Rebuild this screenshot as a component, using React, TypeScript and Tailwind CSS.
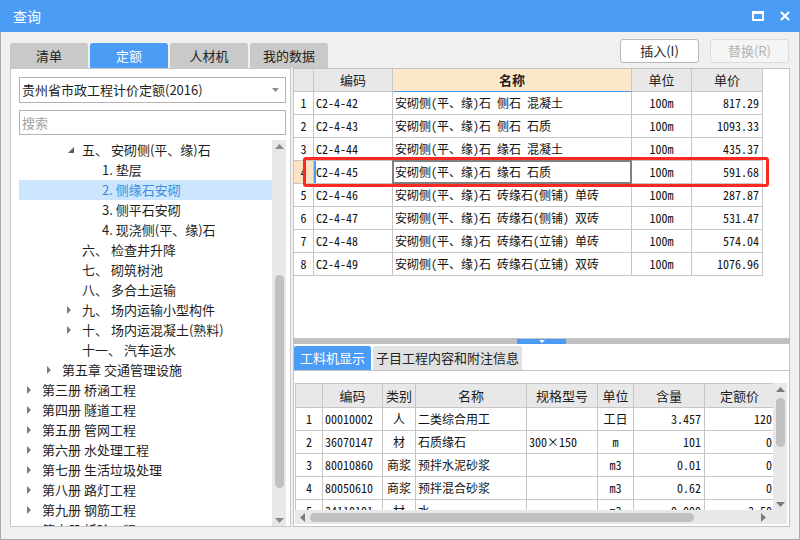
import React from 'react';

const mono = "font-['Noto_Sans_Mono_CJK_SC','Liberation_Mono','Noto_Sans_CJK_SC',monospace] text-[12px]";

type TreeItem = { lvl: number; t: string; exp?: boolean; col?: boolean; sel?: boolean };

const tree: TreeItem[] = [
  { lvl: 2, exp: true, t: '五、 安砌侧(平、缘)石' },
  { lvl: 3, t: '1. 垫层' },
  { lvl: 3, t: '2. 侧缘石安砌', sel: true },
  { lvl: 3, t: '3. 侧平石安砌' },
  { lvl: 3, t: '4. 现浇侧(平、缘)石' },
  { lvl: 2, t: '六、 检查井升降' },
  { lvl: 2, t: '七、 砌筑树池' },
  { lvl: 2, t: '八、 多合土运输' },
  { lvl: 2, col: true, t: '九、 场内运输小型构件' },
  { lvl: 2, col: true, t: '十、 场内运混凝土(熟料)' },
  { lvl: 2, t: '十一、 汽车运水' },
  { lvl: 1, col: true, t: '第五章 交通管理设施' },
  { lvl: 0, col: true, t: '第三册 桥涵工程' },
  { lvl: 0, col: true, t: '第四册 隧道工程' },
  { lvl: 0, col: true, t: '第五册 管网工程' },
  { lvl: 0, col: true, t: '第六册 水处理工程' },
  { lvl: 0, col: true, t: '第七册 生活垃圾处理' },
  { lvl: 0, col: true, t: '第八册 路灯工程' },
  { lvl: 0, col: true, t: '第九册 钢筋工程' },
  { lvl: 0, col: true, t: '第十册 拆除工程' },
];

const indent = ['w-[8px]', 'w-[28px]', 'w-[48px]', 'w-[68px]'];

const topRows = [
  ['1', 'C2-4-42', '安砌侧(平、缘)石 侧石 混凝土', '100m', '817.29'],
  ['2', 'C2-4-43', '安砌侧(平、缘)石 侧石 石质', '100m', '1093.33'],
  ['3', 'C2-4-44', '安砌侧(平、缘)石 缘石 混凝土', '100m', '435.37'],
  ['4', 'C2-4-45', '安砌侧(平、缘)石 缘石 石质', '100m', '591.68'],
  ['5', 'C2-4-46', '安砌侧(平、缘)石 砖缘石(侧铺) 单砖', '100m', '287.87'],
  ['6', 'C2-4-47', '安砌侧(平、缘)石 砖缘石(侧铺) 双砖', '100m', '531.47'],
  ['7', 'C2-4-48', '安砌侧(平、缘)石 砖缘石(立铺) 单砖', '100m', '574.04'],
  ['8', 'C2-4-49', '安砌侧(平、缘)石 砖缘石(立铺) 双砖', '100m', '1076.96'],
];

const botRows = [
  ['1', '00010002', '人', '二类综合用工', '', '工日', '3.457', '120'],
  ['2', '36070147', '材', '石质缘石', '300×150', 'm', '101', '0'],
  ['3', '80010860', '商浆', '预拌水泥砂浆', '', 'm3', '0.01', '0'],
  ['4', '80050610', '商浆', '预拌混合砂浆', '', 'm3', '0.62', '0'],
  ['5', '34110101', '材', '水', '', 'm3', '0.000', '3.50'],
];

function TriRight() {
  return (
    <svg width="5" height="8" viewBox="0 0 5 8">
      <polygon points="0,0 4,4 0,8" fill="#7d7d7d" />
    </svg>
  );
}

function TriExp() {
  return (
    <svg width="6" height="6" viewBox="0 0 6 6">
      <polygon points="6,0 6,6 0,6" fill="#5c5c5c" />
    </svg>
  );
}

function TriUp({ c = '#8a8a8a' }: { c?: string }) {
  return (
    <svg width="9" height="5" viewBox="0 0 9 5">
      <polygon points="0,5 4.5,0 9,5" fill={c} />
    </svg>
  );
}

function TriDown({ c = '#8a8a8a', w = 9, h = 5 }: { c?: string; w?: number; h?: number }) {
  return (
    <svg width={w} height={h} viewBox={`0 0 ${w} ${h}`}>
      <polygon points={`0,0 ${w},0 ${w / 2},${h}`} fill={c} />
    </svg>
  );
}

function TitleBar() {
  return (
    <div className="h-[32px] shrink-0 bg-[#4a9cf4] flex items-center justify-between pl-[13px] pr-[10px] text-white text-[14px]">
      <span>查询</span>
      <div className="flex items-center gap-[16px]">
        <svg width="12" height="10" viewBox="0 0 12 10">
          <rect x="1" y="1.5" width="10" height="7.5" fill="none" stroke="white" strokeWidth="2" />
          <rect x="0" y="0" width="12" height="3" fill="white" />
        </svg>
        <svg width="10" height="10" viewBox="0 0 10 10">
          <path d="M1 1 L9 9 M9 1 L1 9" stroke="white" strokeWidth="2.2" />
        </svg>
      </div>
    </div>
  );
}

function TopRow() {
  const tabs = ['清单', '定额', '人材机', '我的数据'];
  return (
    <div className="h-[36px] shrink-0 flex justify-between">
      <div className="flex items-end gap-[2px]">
        {tabs.map((t, i) => (
          <div
            key={t}
            className={
              i === 1
                ? 'w-[78px] h-[25px] rounded-t-[3px] flex items-center justify-center bg-[#4a9cf4] text-white'
                : 'w-[78px] h-[25px] rounded-t-[3px] flex items-center justify-center bg-[#c9c9c9] text-[#222]'
            }
          >
            {t}
          </div>
        ))}
      </div>
      <div className="flex gap-[11px] pt-[7px] mr-[1px]">
        <div className="w-[79px] h-[24px] border border-[#b9b9b9] rounded-[3px] bg-white flex items-center justify-center text-[#222]">
          插入(I)
        </div>
        <div className="w-[79px] h-[24px] border border-[#dcdcdc] rounded-[3px] bg-[#f5f5f5] flex items-center justify-center text-[#b3b3b3]">
          替换(R)
        </div>
      </div>
    </div>
  );
}

function LeftPanel() {
  return (
    <div className="w-[281px] h-full bg-white border border-[#c9c9c9] pl-[8px] pr-[4px] pt-[8px] flex flex-col">
      <div className="h-[26px] shrink-0 border border-[#b3b3b3] flex items-center justify-between pl-[2px] pr-[6px]">
        <span>贵州省市政工程计价定额(2016)</span>
        <TriDown c="#8c8c8c" w={7} h={4} />
      </div>
      <div className="h-[25px] shrink-0 mt-[7px] border border-[#b3b3b3] flex items-center pl-[2px] text-[#a3a3a3]">
        搜索
      </div>
      <div className="mt-[5px] flex-1 min-h-0 flex overflow-hidden">
        <div className="flex-1 overflow-hidden">
          {tree.map((it, i) => (
            <div
              key={i}
              className={
                it.sel
                  ? 'h-[20px] flex items-center bg-[#cce6fd] text-[#3a8de0] whitespace-nowrap'
                  : 'h-[20px] flex items-center text-[#1e1e1e] whitespace-nowrap'
              }
            >
              <div className={indent[it.lvl] + ' shrink-0'} />
              <div className="w-[15px] shrink-0 flex items-center">
                {it.col && <TriRight />}
                {it.exp && (
                  <span className="ml-[1px] flex">
                    <TriExp />
                  </span>
                )}
              </div>
              <span>{it.t}</span>
            </div>
          ))}
        </div>
        <div className="w-[14px] shrink-0 bg-[#e8e8e8] flex flex-col items-center">
          <div className="h-[12px] flex items-center justify-center">
            <TriUp />
          </div>
          <div className="mt-[123px] w-[9px] h-[213px] rounded-full bg-[#c1c1c1]" />
          <div className="flex-1" />
          <div className="h-[12px] flex items-center justify-center">
            <TriDown />
          </div>
        </div>
      </div>
    </div>
  );
}

const tc = 'border-r border-b border-[#c6c6c6] h-full flex items-center shrink-0 overflow-hidden whitespace-nowrap';

function TopTable() {
  return (
    <div className="h-[271px] shrink-0 bg-white border border-[#c3c3c3] relative overflow-hidden">
      <div className="flex h-[23px]">
        <div className={tc + ' w-[20px] bg-[#e8e8e8]'} />
        <div className={tc + ' w-[79px] bg-[#e8e8e8] justify-center'}>编码</div>
        <div className="w-[239px] h-full border-r border-[#c6c6c6] border-b border-b-[#4a9cf4] bg-[#fde7c9] flex items-center justify-center font-bold shrink-0">
          名称
        </div>
        <div className={tc + ' w-[60px] bg-[#e8e8e8] justify-center'}>单位</div>
        <div className={tc + ' w-[71px] bg-[#e8e8e8] justify-center'}>单价</div>
      </div>
      {topRows.map((r) => {
        const cur = r[0] === '4';
        return (
          <div key={r[0]} className={'flex h-[23px] text-[#111] ' + mono}>
            <div className={tc + (cur ? ' bg-[#fde3c3]' : '') + ' w-[20px] justify-center'}>{r[0]}</div>
            <div className={tc + ' w-[79px] pl-[2px] relative'}>
              {cur && <div className="absolute left-0 top-0 bottom-0 w-[2px] bg-[#4a9cf4]" />}
              {r[1]}
            </div>
            <div className={tc + ' w-[239px] pl-[2px] relative overflow-visible'}>
              {cur && <div className="absolute -left-[1px] -top-[1px] -right-[1px] -bottom-[1px] border-2 border-[#7f7f7f]" />}
              {r[2]}
            </div>
            <div className={tc + ' w-[60px] justify-center'}>{r[3]}</div>
            <div className={tc + ' w-[71px] justify-end pr-[3px]'}>{r[4]}</div>
          </div>
        );
      })}
      <div className="absolute left-[9px] top-[88px] w-[466px] h-[30px] border-[3px] border-[#fa2a22] rounded-[3px]" />
    </div>
  );
}

const bc = 'border-r border-b border-[#c6c6c6] h-full flex items-center shrink-0 overflow-hidden whitespace-nowrap';
const bw = ['w-[27px]', 'w-[60px]', 'w-[33px]', 'w-[111px]', 'w-[71px]', 'w-[36px]', 'w-[71px]'];

function BottomPanel() {
  const heads = ['', '编码', '类别', '名称', '规格型号', '单位', '含量'];
  return (
    <div className="h-[183px] shrink-0 bg-white border-x border-b border-[#c3c3c3] flex flex-col">
      <div className="h-[27px] shrink-0 border-b border-[#c3c3c3] flex items-end gap-[2px]">
        <div className="w-[77px] h-[24px] rounded-t-[2px] bg-[#4a9cf4] text-white flex items-center justify-center">
          工料机显示
        </div>
        <div className="w-[149px] h-[24px] rounded-t-[2px] bg-[#e1e1e1] text-[#222] flex items-center justify-center">
          子目工程内容和附注信息
        </div>
      </div>
      <div className="h-[12px] shrink-0" />
      <div className="flex flex-col pl-[1px] pr-[2px]">
        <div className="flex h-[127px]">
          <div className="w-[478px] border-l border-t border-[#c6c6c6] overflow-hidden">
            <div className="flex h-[24px] bg-[#e8e8e8]">
              {heads.map((h, i) => (
                <div key={i} className={bc + ' ' + bw[i] + ' justify-center'}>
                  {h}
                </div>
              ))}
              <div className="w-[69px] h-full border-b border-[#c6c6c6] flex items-center justify-center shrink-0">定额价</div>
            </div>
            {botRows.map((r) => (
              <div key={r[0]} className={'flex h-[23px] text-[#111] ' + mono}>
                <div className={bc + ' ' + bw[0] + ' justify-center'}>{r[0]}</div>
                <div className={bc + ' ' + bw[1] + ' pl-[2px]'}>{r[1]}</div>
                <div className={bc + ' ' + bw[2] + ' justify-center'}>{r[2]}</div>
                <div className={bc + ' ' + bw[3] + ' pl-[2px]'}>{r[3]}</div>
                <div className={bc + ' ' + bw[4] + ' pl-[2px]'}>{r[4]}</div>
                <div className={bc + ' ' + bw[5] + ' justify-center'}>{r[5]}</div>
                <div className={bc + ' ' + bw[6] + ' justify-end pr-[3px]'}>{r[6]}</div>
                <div className="w-[69px] h-full border-b border-[#c6c6c6] flex items-center justify-end pr-[2px] shrink-0">{r[7]}</div>
              </div>
            ))}
          </div>
          <div className="w-[14px] shrink-0 bg-[#e8e8e8] flex flex-col items-center">
            <div className="h-[12px] flex items-center justify-center">
              <TriUp c="#7a7a7a" />
            </div>
            <div className="mt-[3px] w-[9px] h-[49px] rounded-full bg-[#c1c1c1]" />
            <div className="flex-1" />
            <div className="h-[12px] flex items-center justify-center">
              <TriDown c="#7a7a7a" />
            </div>
          </div>
        </div>
        <div className="h-[14px] flex items-center bg-[#e8e8e8]">
          <div className="w-[15px] flex justify-center">
            <svg width="5" height="9" viewBox="0 0 5 9">
              <polygon points="5,0 0,4.5 5,9" fill="#7a7a7a" />
            </svg>
          </div>
          <div className="w-[384px] h-[9px] rounded-full bg-[#c1c1c1]" />
          <div className="flex-1" />
          <div className="w-[20px] flex justify-center mr-[14px]">
            <svg width="5" height="9" viewBox="0 0 5 9">
              <polygon points="0,0 5,4.5 0,9" fill="#7a7a7a" />
            </svg>
          </div>
        </div>
      </div>
    </div>
  );
}

function RightColumn() {
  return (
    <div className="w-[497px] h-full flex flex-col">
      <TopTable />
      <div className="h-[5px] shrink-0 bg-[#c0c0c0] flex justify-center">
        <div className="w-[49px] h-full bg-[#4a9cf4] flex items-center justify-center">
          <TriDown c="white" w={6} h={3} />
        </div>
      </div>
      <BottomPanel />
    </div>
  );
}

export default function App() {
  return (
    <div className="w-[800px] h-[540px] bg-[#f0f0f0] flex flex-col font-['Noto_Sans_CJK_SC','Noto_Sans',sans-serif] text-[13px] text-[#1e1e1e] overflow-hidden">
      <TitleBar />
      <div className="flex-1 flex flex-col border-x border-b border-[#a9a9a9] pl-[9px] pr-[9px]">
        <TopRow />
        <div className="flex h-[459px] gap-[2px]">
          <LeftPanel />
          <RightColumn />
        </div>
      </div>
    </div>
  );
}
